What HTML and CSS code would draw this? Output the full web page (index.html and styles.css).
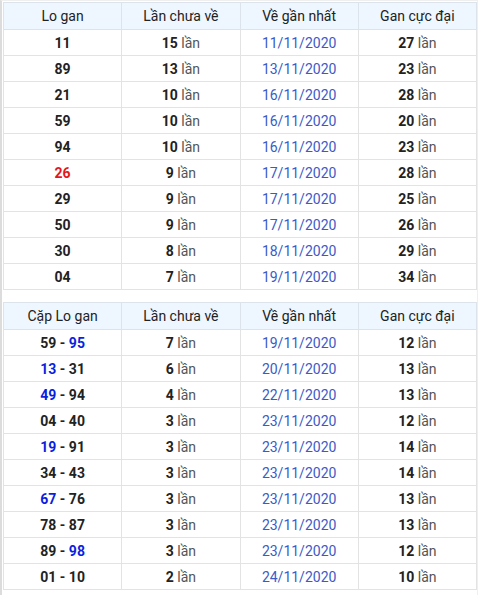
FILE: index.html
```html
<!DOCTYPE html>
<html lang="vi">
<head>
<meta charset="utf-8">
<link rel="stylesheet" href="styles.css">
</head>
<body>
<div class="page">
<table class="gan">
<thead><tr><th>Lo gan</th><th>Lần chưa về</th><th>Về gần nhất</th><th>Gan cực đại</th></tr></thead>
<tbody>
<tr><td class="num">11</td><td><b>15</b> lần</td><td class="date">11/11/2020</td><td><b>27</b> lần</td></tr>
<tr><td class="num">89</td><td><b>13</b> lần</td><td class="date">13/11/2020</td><td><b>23</b> lần</td></tr>
<tr><td class="num">21</td><td><b>10</b> lần</td><td class="date">16/11/2020</td><td><b>28</b> lần</td></tr>
<tr><td class="num">59</td><td><b>10</b> lần</td><td class="date">16/11/2020</td><td><b>20</b> lần</td></tr>
<tr><td class="num">94</td><td><b>10</b> lần</td><td class="date">16/11/2020</td><td><b>23</b> lần</td></tr>
<tr><td class="num red">26</td><td><b>9</b> lần</td><td class="date">17/11/2020</td><td><b>28</b> lần</td></tr>
<tr><td class="num">29</td><td><b>9</b> lần</td><td class="date">17/11/2020</td><td><b>25</b> lần</td></tr>
<tr><td class="num">50</td><td><b>9</b> lần</td><td class="date">17/11/2020</td><td><b>26</b> lần</td></tr>
<tr><td class="num">30</td><td><b>8</b> lần</td><td class="date">18/11/2020</td><td><b>29</b> lần</td></tr>
<tr><td class="num">04</td><td><b>7</b> lần</td><td class="date">19/11/2020</td><td><b>34</b> lần</td></tr>
</tbody>
</table>
<table class="gan second">
<thead><tr><th>Cặp Lo gan</th><th>Lần chưa về</th><th>Về gần nhất</th><th>Gan cực đại</th></tr></thead>
<tbody>
<tr><td class="num">59 - <span class="blue">95</span></td><td><b>7</b> lần</td><td class="date">19/11/2020</td><td><b>12</b> lần</td></tr>
<tr><td class="num"><span class="blue">13</span> - 31</td><td><b>6</b> lần</td><td class="date">20/11/2020</td><td><b>13</b> lần</td></tr>
<tr><td class="num"><span class="blue">49</span> - 94</td><td><b>4</b> lần</td><td class="date">22/11/2020</td><td><b>13</b> lần</td></tr>
<tr><td class="num">04 - 40</td><td><b>3</b> lần</td><td class="date">23/11/2020</td><td><b>12</b> lần</td></tr>
<tr><td class="num"><span class="blue">19</span> - 91</td><td><b>3</b> lần</td><td class="date">23/11/2020</td><td><b>14</b> lần</td></tr>
<tr><td class="num">34 - 43</td><td><b>3</b> lần</td><td class="date">23/11/2020</td><td><b>14</b> lần</td></tr>
<tr><td class="num"><span class="blue">67</span> - 76</td><td><b>3</b> lần</td><td class="date">23/11/2020</td><td><b>13</b> lần</td></tr>
<tr><td class="num">78 - 87</td><td><b>3</b> lần</td><td class="date">23/11/2020</td><td><b>13</b> lần</td></tr>
<tr><td class="num">89 - <span class="blue">98</span></td><td><b>3</b> lần</td><td class="date">23/11/2020</td><td><b>12</b> lần</td></tr>
<tr><td class="num">01 - 10</td><td><b>2</b> lần</td><td class="date">24/11/2020</td><td><b>10</b> lần</td></tr>
</tbody>
</table>
</div>
</body>
</html>
```
FILE: styles.css
```css
html, body {
  margin: 0;
  padding: 0;
  background: #fff;
}
body {
  font-family: Roboto, "Noto Sans", Arial, sans-serif;
  font-size: 14px;
  color: #555;
}
.page {
  width: 478px;
  height: 595px;
  box-sizing: border-box;
  border-left: 2px solid #dcdcdc;
  border-top: 1px solid #efefef;
  border-right: 1px solid #efefef;
  padding: 1px 2px 0 1px;
}
.gan {
  width: 474px;
  border-collapse: collapse;
  border: 1px solid #e3e3e3;
  table-layout: fixed;
}
.second {
  margin-top: 12px;
}
.gan th {
  background: #eef6ff;
  font-weight: normal;
  color: #222;
  height: 26px;
  padding: 0;
  border: 1px solid #dde3ea;
  text-align: center;
}
.gan td {
  height: 25px;
  padding: 0;
  border: 1px solid #e3e3e3;
  text-align: center;
  color: #555;
}
.gan td b {
  color: #222;
  font-weight: bold;
}
.gan td.num {
  font-weight: bold;
  color: #222;
}
.gan td.red {
  color: #e3171d;
}
.blue {
  color: #0a1fe0;
}
.gan td.date {
  color: #3a5bc7;
}
```
